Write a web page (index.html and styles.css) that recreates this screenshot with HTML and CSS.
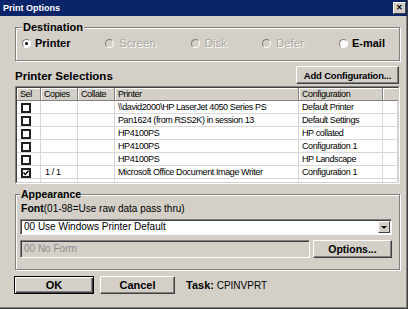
FILE: index.html
```html
<!DOCTYPE html>
<html lang="en">
<head>
    <meta charset="UTF-8">
    <title>Print Options</title>
    <link rel="stylesheet" href="styles.css">
</head>
<body>
    <div class="window">
        <div class="titlebar">
            <span class="title">Print Options</span>
            <span class="close">&#x2715;</span>
        </div>

        <div class="dialog">
            <!-- Destination -->
            <fieldset class="group destination">
                <legend>Destination</legend>
                <div class="radios">
                    <label class="radio"><span class="dot checked"></span>Printer</label>
                    <label class="radio disabled"><span class="dot"></span>Screen</label>
                    <label class="radio disabled"><span class="dot"></span>Disk</label>
                    <label class="radio disabled"><span class="dot"></span>Defer</label>
                    <label class="radio"><span class="dot"></span>E-mail</label>
                </div>
            </fieldset>

            <!-- Printer list -->
            <div class="selections-head">
                <h2>Printer Selections</h2>
                <button class="btn btn-add">Add Configuration...</button>
            </div>

            <div class="grid">
                <div class="grid-inner">
                    <table>
                        <colgroup>
                            <col class="c-sel">
                            <col class="c-copies">
                            <col class="c-collate">
                            <col class="c-printer">
                            <col class="c-config">
                            <col>
                        </colgroup>
                        <thead>
                            <tr>
                                <th>Sel</th>
                                <th>Copies</th>
                                <th>Collate</th>
                                <th>Printer</th>
                                <th>Configuration</th>
                                <th class="filler"></th>
                            </tr>
                        </thead>
                        <tbody>
                            <tr>
                                <td class="sel"><span class="check"></span></td>
                                <td></td><td></td>
                                <td>\\david2000\HP LaserJet 4050 Series PS</td>
                                <td>Default Printer</td>
                                <td></td>
                            </tr>
                            <tr>
                                <td class="sel"><span class="check"></span></td>
                                <td></td><td></td>
                                <td>Pan1624 (from RSS2K) in session 13</td>
                                <td>Default Settings</td>
                                <td></td>
                            </tr>
                            <tr>
                                <td class="sel"><span class="check"></span></td>
                                <td></td><td></td>
                                <td>HP4100PS</td>
                                <td>HP collated</td>
                                <td></td>
                            </tr>
                            <tr>
                                <td class="sel"><span class="check"></span></td>
                                <td></td><td></td>
                                <td>HP4100PS</td>
                                <td>Configuration 1</td>
                                <td></td>
                            </tr>
                            <tr>
                                <td class="sel"><span class="check"></span></td>
                                <td></td><td></td>
                                <td>HP4100PS</td>
                                <td>HP Landscape</td>
                                <td></td>
                            </tr>
                            <tr>
                                <td class="sel">
                                    <span class="check checked">
                                        <svg width="6" height="6" viewBox="0 0 6 6"><polyline points="0.5,2.5 2.3,4.5 5.5,0.8" fill="none" stroke="#000" stroke-width="1.4"/></svg>
                                    </span>
                                </td>
                                <td class="copies">1 / 1</td>
                                <td></td>
                                <td>Microsoft Office Document Image Writer</td>
                                <td>Configuration 1</td>
                                <td></td>
                            </tr>
                            <tr>
                                <td></td><td></td><td></td><td></td><td></td><td></td>
                            </tr>
                        </tbody>
                    </table>
                </div>
            </div>

            <!-- Appearance -->
            <fieldset class="group appearance">
                <legend>Appearance</legend>
                <p class="font-label"><b>Font</b>(01-98=Use raw data pass thru)</p>
                <div class="combo">
                    <span class="combo-text">00 Use Windows Printer Default</span>
                    <span class="combo-arrow"></span>
                </div>
                <div class="form-row">
                    <div class="field disabled">00 No Form</div>
                    <button class="btn btn-options">Options...</button>
                </div>
            </fieldset>

            <div class="actions">
                <button class="btn btn-default">OK</button>
                <button class="btn btn-cancel">Cancel</button>
                <span class="task"><b>Task:</b> CPINVPRT</span>
            </div>
        </div>
    </div>
</body>
</html>
```

FILE: styles.css
```css
:root {
    --face: #d4d0c8;
    --shadow: #808080;
    --dark: #404040;
    --light: #ffffff;
    --navy: #0a246a;
    --grid-line: #d8d8d8;
}

* {
    box-sizing: border-box;
    margin: 0;
    padding: 0;
}

body {
    font-family: "Liberation Sans", Arial, sans-serif;
    font-size: 10px;
    color: #000;
    background-color: var(--face);
}

.window {
    width: 408px;
    height: 309px;
    background-color: var(--face);
    border-right: 1px solid var(--dark);
    border-bottom: 1px solid var(--dark);
    box-shadow: inset -1px -1px 0 var(--shadow);
}

/* Title bar */
.titlebar {
    display: flex;
    align-items: center;
    justify-content: space-between;
    height: 16px;
    padding: 0 1px 0 3px;
    background-color: var(--navy);
    color: #fff;
    font-size: 9px;
    font-weight: bold;
}

.close {
    width: 13px;
    height: 12px;
    background-color: var(--face);
    border: 1px solid;
    border-color: var(--light) var(--dark) var(--dark) var(--light);
    color: #000;
    font-size: 8px;
    line-height: 10px;
    text-align: center;
}

.dialog {
    padding: 4px 7px 0 15px;
}

/* Group boxes */
.group {
    border: 1px solid var(--shadow);
    box-shadow: 1px 1px 0 var(--light), inset 1px 1px 0 var(--light);
}

.group legend {
    padding: 0 1px;
    line-height: 14px;
    font-weight: bold;
    background-color: var(--face);
}

.destination {
    padding: 2px 14px 10px 6px;
}

.destination legend {
    font-size: 11px;
}

.radios {
    display: flex;
    justify-content: space-between;
    align-items: center;
    height: 14px;
}

.radio {
    display: flex;
    align-items: center;
    font-size: 11px;
    font-weight: bold;
}

.dot {
    display: flex;
    align-items: center;
    justify-content: center;
    width: 9px;
    height: 9px;
    margin-right: 4px;
    border-radius: 50%;
    border: 1px solid;
    border-color: var(--shadow) var(--light) var(--light) var(--shadow);
    background-color: #fff;
}

.dot.checked::after {
    content: "";
    width: 3px;
    height: 3px;
    border-radius: 50%;
    background-color: #000;
}

.radio.disabled {
    color: #aca89f;
    font-size: 11.5px;
    font-weight: normal;
    text-shadow: 1px 1px 0 #fff;
}

.radio.disabled .dot {
    margin-right: 5px;
    background-color: var(--face);
}

/* Buttons */
.btn {
    height: 18px;
    font-family: inherit;
    font-weight: bold;
    color: #000;
    background-color: var(--face);
    border: 1px solid;
    border-color: var(--light) var(--dark) var(--dark) var(--light);
    box-shadow: inset -1px -1px 0 var(--shadow);
}

.btn-default {
    width: 80px;
    font-size: 11px;
    border-color: #000;
    box-shadow: inset 1px 1px 0 var(--light), inset -1px -1px 0 var(--dark), inset -2px -2px 0 var(--shadow);
}

.btn-cancel {
    width: 75px;
    margin-left: 6px;
    font-size: 11px;
}

.btn-add {
    width: 103px;
    margin-right: 1px;
    font-size: 9.5px;
    letter-spacing: -0.2px;
}

.btn-options {
    width: 79px;
    font-size: 10.5px;
}

/* Printer list */
.selections-head {
    display: flex;
    justify-content: space-between;
    align-items: flex-end;
    margin: 5px 0 2px;
}

.selections-head h2 {
    font-size: 11.5px;
    line-height: 14px;
    margin-bottom: 1px;
}

.grid {
    height: 98px;
    overflow: hidden;
    background-color: #fff;
    border: 1px solid;
    border-color: var(--shadow) var(--light) var(--light) var(--shadow);
}

.grid-inner {
    height: 96px;
    overflow: hidden;
    border: 1px solid;
    border-color: var(--dark) var(--face) var(--face) var(--dark);
}

table {
    width: 100%;
    table-layout: fixed;
    border-collapse: separate;
    border-spacing: 0;
    font-size: 9px;
    letter-spacing: -0.4px;
}

.c-sel { width: 24px; }
.c-copies { width: 37px; }
.c-collate { width: 37px; }
.c-printer { width: 184px; }
.c-config { width: 84px; }

th {
    height: 13px;
    padding: 0 3px;
    line-height: 12px;
    font-weight: normal;
    text-align: left;
    white-space: nowrap;
    background-color: var(--face);
    border-right: 1px solid var(--shadow);
    border-bottom: 1px solid var(--shadow);
    box-shadow: inset 1px 1px 0 var(--light);
}

th.filler {
    border-right: none;
}

td {
    height: 13px;
    padding: 0 3px;
    line-height: 12px;
    white-space: nowrap;
    overflow: hidden;
    border-right: 1px solid var(--grid-line);
    border-bottom: 1px solid var(--grid-line);
}

td.sel {
    padding-left: 4px;
}

td.copies {
    padding-left: 4px;
}

.check {
    display: flex;
    align-items: center;
    justify-content: center;
    width: 10px;
    height: 10px;
    margin-top: 1px;
    border: 2px solid #202020;
    background-color: #fff;
}

/* Appearance */
.appearance {
    margin-top: 3px;
    padding: 0 7px 11px 4px;
}

.appearance legend {
    font-size: 10.5px;
}

.font-label {
    padding-left: 1px;
    line-height: 14px;
    font-size: 10px;
}

.font-label b {
    font-size: 10.5px;
}

.combo {
    display: flex;
    justify-content: space-between;
    height: 16px;
    margin-top: 3px;
    background-color: #fff;
    border: 1px solid;
    border-color: var(--shadow) var(--light) var(--light) var(--shadow);
    box-shadow: inset 1px 1px 0 var(--dark);
}

.combo-text {
    padding-left: 3px;
    line-height: 14px;
}

.combo-arrow {
    display: flex;
    align-items: center;
    justify-content: center;
    width: 12px;
    height: 12px;
    margin: 1px 1px 0 0;
    background-color: var(--face);
    border: 1px solid;
    border-color: var(--light) var(--dark) var(--dark) var(--light);
}

.combo-arrow::after {
    content: "";
    border-left: 3px solid transparent;
    border-right: 3px solid transparent;
    border-top: 3px solid #000;
}

.form-row {
    display: flex;
    gap: 3px;
    margin-top: 5px;
}

.field {
    flex: 1;
    height: 18px;
    padding-left: 3px;
    line-height: 16px;
    border: 1px solid;
    border-color: var(--shadow) var(--light) var(--light) var(--shadow);
    box-shadow: inset 1px 1px 0 var(--dark);
}

.field.disabled {
    color: #8c8c8c;
    background-color: var(--face);
}

/* Bottom buttons */
.actions {
    display: flex;
    align-items: center;
    margin: 6px 0 0 -1px;
}

.task {
    margin-left: 11px;
    font-size: 10px;
}

.task b {
    font-size: 11px;
}
```
